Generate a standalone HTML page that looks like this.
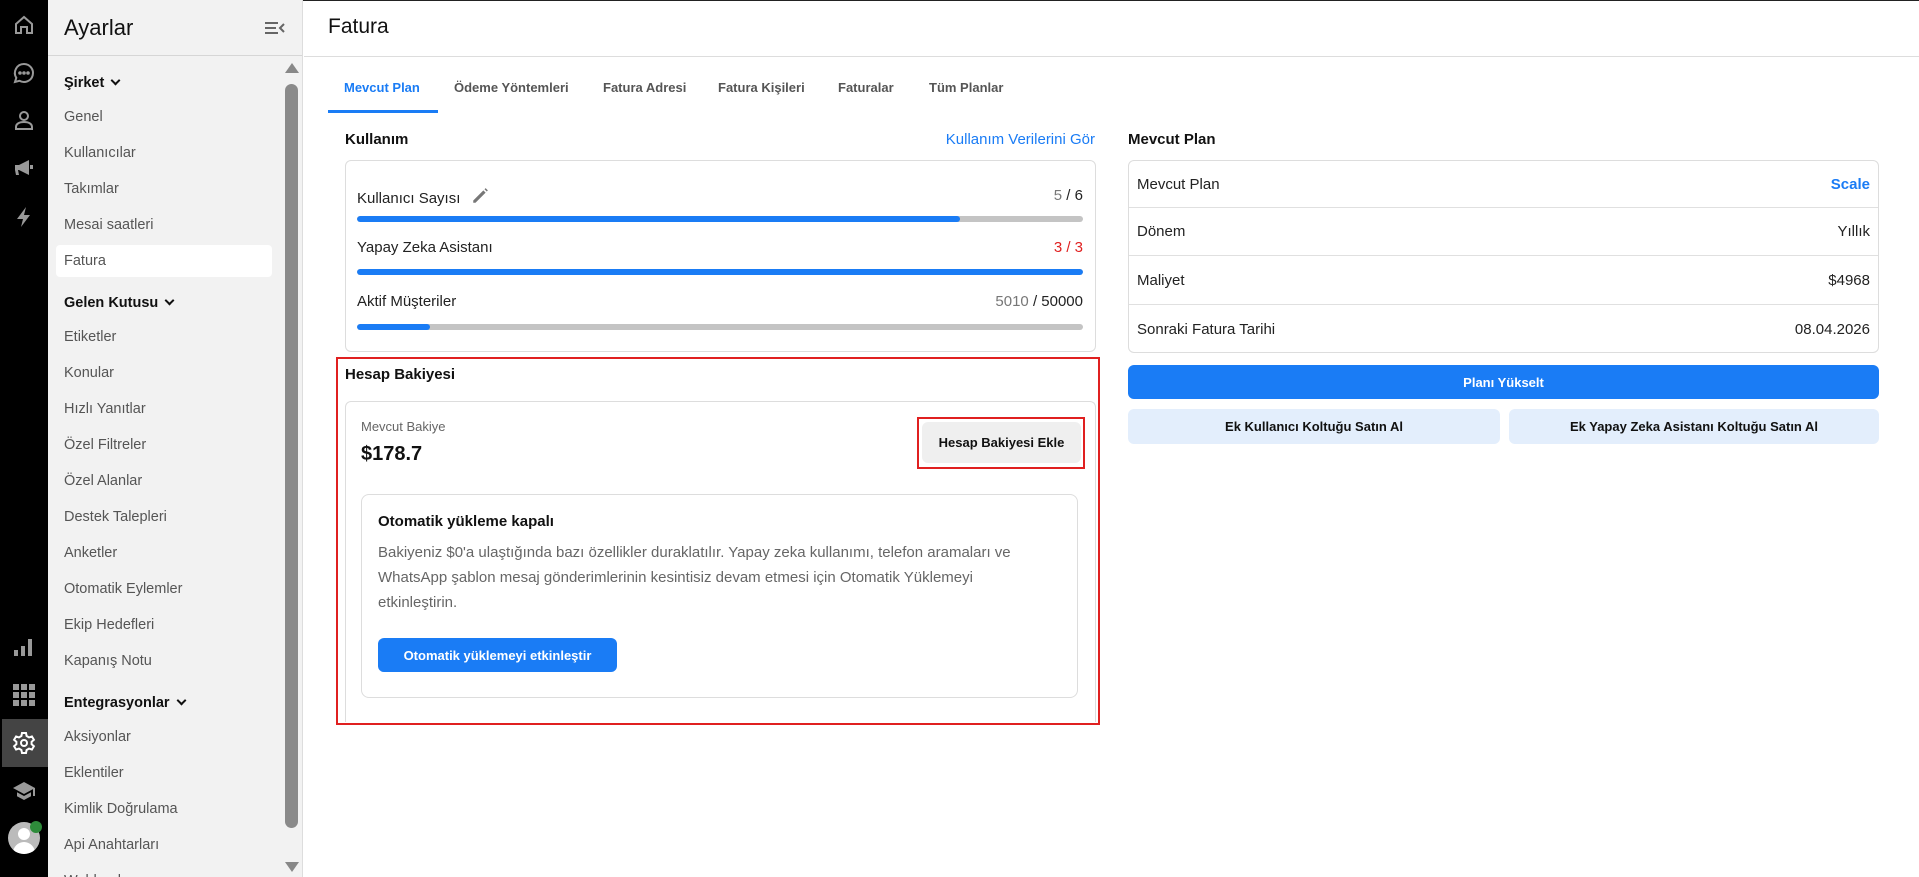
<!DOCTYPE html>
<html><head><meta charset="utf-8"><style>
*{box-sizing:border-box;margin:0;padding:0}
body{width:1919px;height:877px;overflow:hidden;font-family:"Liberation Sans",sans-serif;background:#fff;position:relative;color:#111}
.abs{position:absolute}
.rail{left:0;top:0;width:48px;height:877px;background:#000}
.rail svg{position:absolute;left:12px}
.side{left:48px;top:0;width:255px;height:877px;background:#f2f2f2;border-right:1px solid #ddd;overflow:hidden}
.side .hd{height:56px;border-bottom:1px solid #d6d6d6;position:relative}
.mi{position:absolute;left:16px;font-size:14.5px;color:#555;line-height:20px}
.mh{position:absolute;left:16px;font-size:14.5px;color:#111;font-weight:bold;line-height:20px}
.chev{display:inline-block;width:7px;height:7px;border-right:2px solid #111;border-bottom:2px solid #111;transform:rotate(45deg);margin-left:8px;position:relative;top:-3px}
.tab{position:absolute;top:80px;font-size:13px;font-weight:bold;color:#555;white-space:nowrap}
.card{position:absolute;border:1px solid #ddd;border-radius:6px;background:#fff}
.lbl{position:absolute;font-size:15px;color:#222;white-space:nowrap}
.bar{position:absolute;left:11px;right:12px;height:6px;border-radius:3px;background:#c4c4c4;overflow:hidden}
.bar i{display:block;height:100%;background:#1a7cf5;border-radius:3px}
.row{position:absolute;left:0;right:0;height:48px;border-bottom:1px solid #e0e0e0;font-size:15px;color:#222;padding:0 8px;display:flex;justify-content:space-between;align-items:center}
.btn{position:absolute;border-radius:6px;font-size:13px;font-weight:bold;display:flex;align-items:center;justify-content:center;white-space:nowrap}
</style></head><body>
<div class="abs" style="left:0;top:0;width:1919px;height:1px;background:#222"></div>
<div class="abs rail">
<svg style="top:13px" width="24" height="24" viewBox="0 0 24 24" fill="none" stroke="#999" stroke-width="2"><path d="M4 11 12 4l8 7v9h-5v-6H9v6H4z"/></svg>
<svg style="top:61px" width="24" height="24" viewBox="0 0 24 24" fill="none" stroke="#999" stroke-width="2"><path d="M12 3a9 9 0 1 1-4.5 16.8L3 21l1.3-4.2A9 9 0 0 1 12 3z"/><circle cx="8" cy="12" r=".8" fill="#999"/><circle cx="12" cy="12" r=".8" fill="#999"/><circle cx="16" cy="12" r=".8" fill="#999"/></svg>
<svg style="top:108px" width="24" height="24" viewBox="0 0 24 24" fill="none" stroke="#999" stroke-width="2"><circle cx="12" cy="8" r="4"/><path d="M4 21v-2c0-3 3-5 8-5s8 2 8 5v2z"/></svg>
<svg style="top:156px" width="24" height="24" viewBox="0 0 24 24" fill="#999"><path d="M3 9h4l10-5v15L7 14H6l1 5H4l-1-5z"/><rect x="18" y="9" width="3" height="4"/></svg>
<svg style="top:205px" width="24" height="24" viewBox="0 0 24 24" fill="#999"><path d="M14 2 5 14h6l-2 8 9-12h-6z"/></svg>
<svg style="top:635px" width="24" height="24" viewBox="0 0 24 24" fill="#999"><rect x="2" y="15" width="4" height="6"/><rect x="9" y="11" width="4" height="10"/><rect x="16" y="4" width="4" height="17"/></svg>
<svg style="top:683px" width="24" height="24" viewBox="0 0 24 24" fill="#999"><rect x="1" y="1" width="6" height="6"/><rect x="9" y="1" width="6" height="6"/><rect x="17" y="1" width="6" height="6"/><rect x="1" y="9" width="6" height="6"/><rect x="9" y="9" width="6" height="6"/><rect x="17" y="9" width="6" height="6"/><rect x="1" y="17" width="6" height="6"/><rect x="9" y="17" width="6" height="6"/><rect x="17" y="17" width="6" height="6"/></svg>
<div class="abs" style="left:2px;top:719px;width:46px;height:48px;background:#444"></div>
<svg style="top:731px" width="24" height="24" viewBox="0 0 24 24" fill="none" stroke="#fff" stroke-width="2"><circle cx="12" cy="12" r="3"/><path d="M10 2h4l.6 3 2.4 1.4 2.9-1 2 3.4-2.3 2v2.4l2.3 2-2 3.4-2.9-1L14.6 19l-.6 3h-4l-.6-3L7 17.6l-2.9 1-2-3.4 2.3-2v-2.4l-2.3-2 2-3.4 2.9 1L9.4 5z"/></svg>
<svg style="top:779px" width="24" height="24" viewBox="0 0 24 24" fill="#999"><path d="M12 3 1 9l11 6 9-4.9V17h2V9z"/><path d="M5 13.2v4L12 21l7-3.8v-4L12 17z"/></svg>
<div class="abs" style="left:8px;top:822px;width:32px;height:32px;border-radius:50%;background:#bbb;overflow:hidden"><div class="abs" style="left:10px;top:6px;width:12px;height:12px;border-radius:50%;background:#fff"></div><div class="abs" style="left:5px;top:20px;width:22px;height:14px;border-radius:11px 11px 0 0;background:#fff"></div></div>
<div class="abs" style="left:30px;top:821px;width:12px;height:12px;border-radius:50%;background:#2e8b3a"></div>
</div>
<div class="abs side">
<div class="hd"><div class="abs" style="left:16px;top:15px;font-size:22px;font-weight:500;color:#111">Ayarlar</div>
<svg class="abs" style="left:217px;top:21px" width="20" height="14" viewBox="0 0 20 14" stroke="#666" stroke-width="2" fill="none"><path d="M0 2h13M0 7h11M0 12h13M19 3l-4 4 4 4"/></svg></div>
<div class="abs" style="left:237px;top:63px;width:0;height:0;border-left:7px solid transparent;border-right:7px solid transparent;border-bottom:10px solid #888"></div>
<div class="abs" style="left:237px;top:84px;width:13px;height:744px;border-radius:7px;background:#8a8a8a"></div>
<div class="abs" style="left:237px;top:862px;width:0;height:0;border-left:7px solid transparent;border-right:7px solid transparent;border-top:10px solid #888"></div>
<div class="abs" style="left:8px;top:245px;width:216px;height:32px;background:#fff;border-radius:4px"></div>
<div class="mh" style="top:73px">Şirket<span class="chev"></span></div>
<div class="mi" style="top:107px">Genel</div>
<div class="mi" style="top:143px">Kullanıcılar</div>
<div class="mi" style="top:179px">Takımlar</div>
<div class="mi" style="top:215px">Mesai saatleri</div>
<div class="mi" style="top:251px">Fatura</div>
<div class="mh" style="top:293px">Gelen Kutusu<span class="chev"></span></div>
<div class="mi" style="top:327px">Etiketler</div>
<div class="mi" style="top:363px">Konular</div>
<div class="mi" style="top:399px">Hızlı Yanıtlar</div>
<div class="mi" style="top:435px">Özel Filtreler</div>
<div class="mi" style="top:471px">Özel Alanlar</div>
<div class="mi" style="top:507px">Destek Talepleri</div>
<div class="mi" style="top:543px">Anketler</div>
<div class="mi" style="top:579px">Otomatik Eylemler</div>
<div class="mi" style="top:615px">Ekip Hedefleri</div>
<div class="mi" style="top:651px">Kapanış Notu</div>
<div class="mh" style="top:693px">Entegrasyonlar<span class="chev"></span></div>
<div class="mi" style="top:727px">Aksiyonlar</div>
<div class="mi" style="top:763px">Eklentiler</div>
<div class="mi" style="top:799px">Kimlik Doğrulama</div>
<div class="mi" style="top:835px">Api Anahtarları</div>
<div class="mi" style="top:871px">Webhooks</div>
</div>
<div class="abs" style="left:304px;top:56px;width:1615px;height:1px;background:#ddd"></div>
<div class="abs" style="left:328px;top:15px;font-size:21px;font-weight:500">Fatura</div>
<div class="tab" style="left:344px;color:#1a7cf5">Mevcut Plan</div>
<div class="abs" style="left:328px;top:110px;width:110px;height:3px;background:#1a7cf5"></div>
<div class="tab" style="left:454px">Ödeme Yöntemleri</div>
<div class="tab" style="left:603px">Fatura Adresi</div>
<div class="tab" style="left:718px">Fatura Kişileri</div>
<div class="tab" style="left:838px">Faturalar</div>
<div class="tab" style="left:929px">Tüm Planlar</div>

<div class="abs" style="left:345px;top:131px;font-size:15px;font-weight:bold">Kullanım</div>
<div class="abs" style="left:795px;width:300px;text-align:right;top:131px;font-size:15px;color:#1a7cf5">Kullanım Verilerini Gör</div>
<div class="card" style="left:345px;top:160px;width:751px;height:192px">
<div class="lbl" style="left:11px;top:26px">Kullanıcı Sayısı <svg style="vertical-align:-2px;margin-left:6px" width="18" height="18" viewBox="0 0 16 16" fill="#777"><path d="M2 12 11 3l2 2-9 9H2zM12 2l1-1 2 2-1 1z"/></svg></div>
<div class="lbl" style="right:12px;top:26px"><span style="color:#777">5</span> / 6</div>
<div class="bar" style="top:55px"><i style="width:83%"></i></div>
<div class="lbl" style="left:11px;top:78px">Yapay Zeka Asistanı</div>
<div class="lbl" style="right:12px;top:78px;color:#e02020">3 / 3</div>
<div class="bar" style="top:108px"><i style="width:100%"></i></div>
<div class="lbl" style="left:11px;top:132px">Aktif Müşteriler</div>
<div class="lbl" style="right:12px;top:132px"><span style="color:#777">5010</span> / 50000</div>
<div class="bar" style="top:163px"><i style="width:10%"></i></div>
</div>

<div class="abs" style="left:336px;top:357px;width:764px;height:368px;border:2px solid #e02020"></div>
<div class="abs" style="left:345px;top:366px;font-size:15px;font-weight:bold">Hesap Bakiyesi</div>
<div class="abs" style="left:345px;top:401px;width:751px;height:321px;border:1px solid #ddd;border-bottom:none;border-radius:6px 6px 0 0"></div>
<div class="abs" style="left:361px;top:419px;font-size:13px;color:#666">Mevcut Bakiye</div>
<div class="abs" style="left:361px;top:443px;font-size:20px;font-weight:bold">$178.7</div>
<div class="abs" style="left:917px;top:417px;width:168px;height:52px;border:2px solid #e02020"></div>
<div class="btn" style="left:922px;top:422px;width:159px;height:41px;background:#efefef;color:#111">Hesap Bakiyesi Ekle</div>
<div class="abs" style="left:361px;top:494px;width:717px;height:204px;border:1px solid #ddd;border-radius:8px"></div>
<div class="abs" style="left:378px;top:513px;font-size:15px;font-weight:bold">Otomatik yükleme kapalı</div>
<div class="abs" style="left:378px;top:540px;width:645px;font-size:15px;line-height:25px;color:#666">Bakiyeniz $0'a ulaştığında bazı özellikler duraklatılır. Yapay zeka kullanımı, telefon aramaları ve WhatsApp şablon mesaj gönderimlerinin kesintisiz devam etmesi için Otomatik Yüklemeyi etkinleştirin.</div>
<div class="btn" style="left:378px;top:638px;width:239px;height:34px;background:#1a7cf5;color:#fff">Otomatik yüklemeyi etkinleştir</div>

<div class="abs" style="left:1128px;top:131px;font-size:15px;font-weight:bold">Mevcut Plan</div>
<div class="card" style="left:1128px;top:160px;width:751px;height:193px;overflow:hidden">
<div class="row" style="top:0;height:47px"><span>Mevcut Plan</span><span style="color:#1a7cf5;font-weight:bold">Scale</span></div>
<div class="row" style="top:47px"><span>Dönem</span><span>Yıllık</span></div>
<div class="row" style="top:95px;height:49px"><span>Maliyet</span><span>$4968</span></div>
<div class="row" style="top:144px;border:none"><span>Sonraki Fatura Tarihi</span><span>08.04.2026</span></div>
</div>
<div class="btn" style="left:1128px;top:365px;width:751px;height:34px;background:#1a7cf5;color:#fff">Planı Yükselt</div>
<div class="btn" style="left:1128px;top:409px;width:372px;height:35px;background:#e3eefc;color:#111">Ek Kullanıcı Koltuğu Satın Al</div>
<div class="btn" style="left:1509px;top:409px;width:370px;height:35px;background:#e3eefc;color:#111">Ek Yapay Zeka Asistanı Koltuğu Satın Al</div>
</body></html>
